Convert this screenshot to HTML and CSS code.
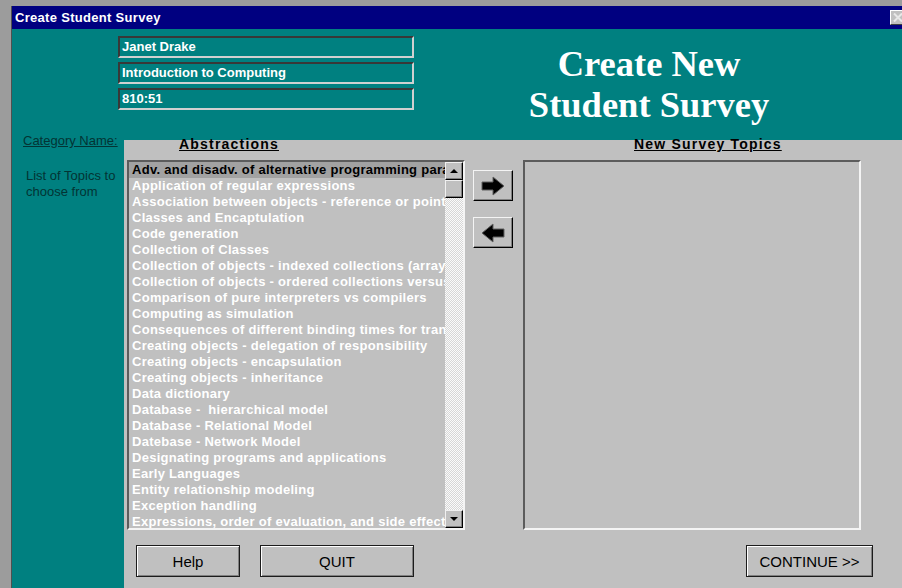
FILE: index.html
```html
<!DOCTYPE html>
<html lang="en">
<head>
<meta charset="utf-8">
<title>Create Student Survey</title>
<link rel="stylesheet" href="styles.css">
</head>
<body>
<div class="frame">
  <div class="window">
    <div class="titlebar">
      <span class="title">Create Student Survey</span>
      <span class="close">
        <svg width="10" height="9" viewBox="0 0 10 9"><path d="M1 0.5 L9 8.5 M9 0.5 L1 8.5" stroke="#e8e8e8" stroke-width="2"/></svg>
      </span>
    </div>
    <div class="client">
      <header class="top">
        <div class="fields">
          <div class="field">Janet Drake</div>
          <div class="field">Introduction to Computing</div>
          <div class="field">810:51</div>
        </div>
        <h1 class="banner">Create New<br>Student Survey</h1>
      </header>
      <div class="body">
        <aside class="side">
          <p class="cat">Category Name:</p>
          <p class="hint">List of Topics to<br>choose from</p>
        </aside>
        <section class="panel">
          <div class="lists">
            <div class="col col-src">
              <h2 class="col-head">Abstractions</h2>
              <div class="listbox">
                <ul class="items">
                  <li class="sel">Adv. and disadv. of alternative programming paradigms</li>
                  <li>Application of regular expressions</li>
                  <li>Association between objects - reference or pointer</li>
                  <li>Classes and Encaptulation</li>
                  <li>Code generation</li>
                  <li>Collection of Classes</li>
                  <li>Collection of objects - indexed collections (arrays)</li>
                  <li>Collection of objects - ordered collections versus sets</li>
                  <li>Comparison of pure interpreters vs compilers</li>
                  <li>Computing as simulation</li>
                  <li>Consequences of different binding times for translation</li>
                  <li>Creating objects - delegation of responsibility</li>
                  <li>Creating objects - encapsulation</li>
                  <li>Creating objects - inheritance</li>
                  <li>Data dictionary</li>
                  <li>Database -  hierarchical model</li>
                  <li>Database - Relational Model</li>
                  <li>Datebase - Network Model</li>
                  <li>Designating programs and applications</li>
                  <li>Early Languages</li>
                  <li>Entity relationship modeling</li>
                  <li>Exception handling</li>
                  <li>Expressions, order of evaluation, and side effects</li>
                </ul>
                <div class="scrollbar">
                  <div class="sb-btn"><span class="tri tri-up"></span></div>
                  <div class="sb-btn"></div>
                  <div class="sb-track"></div>
                  <div class="sb-btn"><span class="tri tri-down"></span></div>
                </div>
              </div>
            </div>
            <div class="movers">
              <button class="mover" type="button">
                <svg width="24" height="20" viewBox="0 0 24 20"><polygon points="1,6 12,6 12,1 23,10 12,19 12,14 1,14" fill="#000" stroke="#606060" stroke-width="1"/></svg>
              </button>
              <button class="mover" type="button">
                <svg width="24" height="20" viewBox="0 0 24 20"><polygon points="23,6 12,6 12,1 1,10 12,19 12,14 23,14" fill="#000" stroke="#606060" stroke-width="1"/></svg>
              </button>
            </div>
            <div class="col col-dst">
              <h2 class="col-head">New Survey Topics</h2>
              <div class="listbox"></div>
            </div>
          </div>
          <div class="actions">
            <button class="btn btn-help" type="button">Help</button>
            <button class="btn btn-quit" type="button">QUIT</button>
            <button class="btn btn-continue" type="button">CONTINUE &gt;&gt;</button>
          </div>
        </section>
      </div>
    </div>
  </div>
</div>
</body>
</html>
```
FILE: styles.css
```css
* { box-sizing: border-box; }

body {
  margin: 0;
  background: #9c9c9c;
  font-family: "Liberation Sans", Arial, sans-serif;
  overflow: hidden;
}

.frame {
  height: 588px;
  padding: 6px 0 0 11px;
}

.window {
  height: 100%;
  display: flex;
  flex-direction: column;
  border-left: 1px solid #505050;
}

/* caption bar */
.titlebar {
  height: 23px;
  flex: none;
  background: #000080;
  display: flex;
  align-items: center;
  justify-content: space-between;
  padding-left: 3px;
  color: #fff;
  font-size: 13px;
  font-weight: bold;
  letter-spacing: 0.3px;
}

.close {
  width: 16px;
  height: 15px;
  margin-right: -4px;
  background: #c0c0c0;
  border: 1px solid;
  border-color: #fff #404040 #404040 #fff;
  display: flex;
  align-items: center;
  justify-content: center;
}

/* teal client area */
.client {
  flex: 1;
  background: #008080;
  display: flex;
  flex-direction: column;
  min-height: 0;
}

.top {
  height: 111px;
  flex: none;
  display: flex;
  padding: 7px 0 0 106px;
}

.fields {
  width: 296px;
  display: flex;
  flex-direction: column;
  gap: 4px;
}

.field {
  height: 22px;
  border: 2px solid;
  border-color: #383838 #d0d0d0 #d0d0d0 #383838;
  padding-left: 2px;
  color: #fff;
  font-size: 13px;
  font-weight: bold;
  line-height: 17px;
}

.banner {
  flex: 1;
  margin: 0;
  padding: 7px 18px 0 0;
  text-align: center;
  color: #fff;
  font: bold 36.5px/41px "Liberation Serif", "Times New Roman", serif;
}

.body {
  flex: 1;
  display: flex;
  min-height: 0;
}

.side {
  width: 112px;
  flex: none;
  color: #033434;
  font-size: 13px;
}

.cat {
  margin: -6px 0 0 11px;
  line-height: 14px;
  text-decoration: underline;
}

.hint {
  margin: 20px 0 0 14px;
  line-height: 16px;
}

/* gray dialog panel */
.panel {
  flex: 1;
  background: #c0c0c0;
  padding-left: 3px;
  display: flex;
  flex-direction: column;
}

.lists {
  display: flex;
  align-items: flex-start;
}

.col {
  width: 338px;
  flex: none;
}

.col-head {
  margin: -4px 0 8px;
  height: 16px;
  color: #000;
  font-size: 14px;
  line-height: 16px;
  font-weight: bold;
  letter-spacing: 1.2px;
  text-decoration: underline;
  white-space: nowrap;
}

.col-src .col-head { padding-left: 52px; }
.col-dst .col-head { padding-left: 111px; }

.listbox {
  height: 370px;
  border: 2px solid;
  border-color: #5c5c5c #f4f4f4 #f4f4f4 #5c5c5c;
  display: flex;
}

.items {
  flex: 1;
  min-width: 0;
  list-style: none;
  margin: 0;
  padding: 0;
  overflow: hidden;
}

.items li {
  height: 16px;
  line-height: 16px;
  padding-left: 3px;
  white-space: pre;
  overflow: hidden;
  color: #fff;
  font-size: 13px;
  font-weight: bold;
  letter-spacing: 0.28px;
}

.items li.sel {
  background: #a2a2a2;
  color: #000;
}

.scrollbar {
  width: 18px;
  flex: none;
  display: flex;
  flex-direction: column;
  background: repeating-conic-gradient(#fafafa 0 25%, #d6d6d6 0 50%) 0 0 / 2px 2px;
}

.sb-btn {
  height: 18px;
  flex: none;
  background: #c0c0c0;
  border: 1px solid;
  border-color: #f0f0f0 #000 #000 #f0f0f0;
  box-shadow: inset -1px -1px 0 #808080;
  display: flex;
  align-items: center;
  justify-content: center;
}

.sb-track { flex: 1; }

.tri {
  width: 0;
  height: 0;
  border-left: 4px solid transparent;
  border-right: 4px solid transparent;
}

.tri-up { border-bottom: 4px solid #000; }
.tri-down { border-top: 4px solid #000; }

.movers {
  width: 40px;
  flex: none;
  margin: 30px 10px 0 8px;
  display: flex;
  flex-direction: column;
  gap: 16px;
}

.mover {
  height: 31px;
  padding: 0;
  background: #c0c0c0;
  border: 1px solid;
  border-color: #f4f4f4 #000 #000 #f4f4f4;
  box-shadow: inset -1px -1px 0 #808080;
  display: flex;
  align-items: center;
  justify-content: center;
}

.actions {
  display: flex;
  margin-top: 15px;
  padding-left: 9px;
  gap: 20px;
}

.btn {
  height: 32px;
  padding: 0;
  background: #c0c0c0;
  border: 1px solid #1c1c1c;
  box-shadow: inset 1px 1px 0 #fff, inset -1px -1px 0 #808080;
  color: #000;
  font-family: "Liberation Sans", Arial, sans-serif;
  font-size: 15px;
}

.btn-help { width: 104px; }
.btn-quit { width: 154px; }
.btn-continue { width: 127px; margin-left: auto; margin-right: 29px; }
```
